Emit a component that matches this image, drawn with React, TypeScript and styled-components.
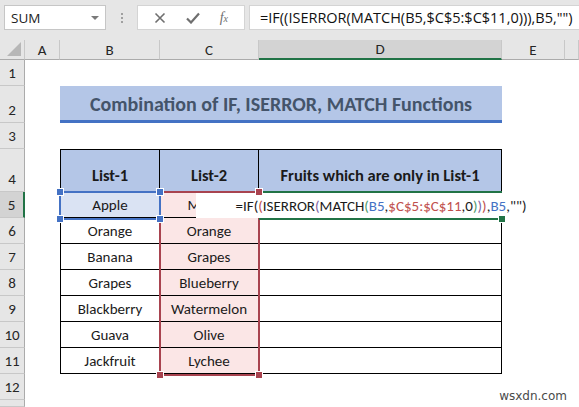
import React from 'react'
import styled, { createGlobalStyle, css } from 'styled-components'

const GlobalStyle = createGlobalStyle`
  html, body {
    margin: 0;
    padding: 0;
    background: #ffffff;
    overflow: hidden;
  }

  body {
    font-family: 'Carlito', 'Lato', sans-serif;
  }
`

const GREEN = '#217346'
const REF_BLUE = '#4472c4'
const REF_RED = '#a8434f'

const Window = styled.div`
  width: 579px;
  height: 407px;
  display: flex;
  flex-direction: column;
  overflow: hidden;
`

/* ---------- formula bar ---------- */

const FormulaBar = styled.div`
  height: 40px;
  flex: none;
  box-sizing: border-box;
  padding: 5px 0 0 4px;
  background: #e6e6e6;
  display: flex;
  align-items: flex-start;
  font-family: 'Open Sans', 'Noto Sans', sans-serif;
`

const NameBox = styled.div`
  width: 102px;
  height: 25px;
  box-sizing: border-box;
  background: #fff;
  border: 1px solid #c6c6c6;
  display: flex;
  align-items: center;
  justify-content: space-between;
  padding: 0 6px 0 6px;
  font-size: 13.5px;
  color: #222;
`

const Caret = styled.span`
  width: 0;
  height: 0;
  border-left: 4px solid transparent;
  border-right: 4px solid transparent;
  border-top: 4px solid #7a7a7a;
`

const Grip = styled.div`
  width: 31px;
  height: 25px;
  display: flex;
  flex-direction: column;
  align-items: center;
  justify-content: center;
  gap: 2px;

  span {
    width: 2px;
    height: 2px;
    background: #a0a0a0;
  }
`

const FxBox = styled.div`
  width: 108px;
  height: 25px;
  box-sizing: border-box;
  background: #fff;
  border: 1px solid #d4d4d4;
  display: flex;
  align-items: center;
  justify-content: space-around;
  padding: 0 6px;
  color: #6f6f6f;
`

const FxLabel = styled.span`
  font-family: 'Liberation Serif', serif;
  font-style: italic;
  font-size: 14px;
  color: #6f6f6f;

  sub {
    font-size: 10px;
    vertical-align: baseline;
  }
`

const FormulaInput = styled.div`
  flex: 1;
  height: 25px;
  margin-left: 4px;
  box-sizing: border-box;
  background: #fff;
  border: 1px solid #d4d4d4;
  border-right: none;
  display: flex;
  align-items: center;
  padding-left: 10px;
  font-size: 14.5px;
  color: #111;
  white-space: nowrap;
`

/* ---------- sheet ---------- */

const Sheet = styled.div`
  position: relative;
  flex: 1;
  display: grid;
  grid-template-columns: 25px 35px 100px 99px 243px 63px 1fr;
  grid-template-rows: 20px 26px 37px 26px 43px repeat(8, 26px) 1fr;
  background: #fff;
`

const Corner = styled.div`
  background: #e6e6e6;
  border-right: 1px solid #c8c8c8;
  border-bottom: 1px solid #ababab;
  box-sizing: border-box;
  position: relative;

  &::after {
    content: '';
    position: absolute;
    right: 3px;
    bottom: 3px;
    border-left: 14px solid transparent;
    border-bottom: 14px solid #b7b7b7;
  }
`

const ColHead = styled.div<{ $active?: boolean }>`
  box-sizing: border-box;
  background: ${(p) => (p.$active ? '#d3d3d3' : '#e6e6e6')};
  border-right: 1px solid #c8c8c8;
  border-bottom: ${(p) => (p.$active ? `2px solid ${GREEN}` : '1px solid #ababab')};
  display: flex;
  align-items: center;
  justify-content: center;
  font-size: 15px;
  color: #262626;
`

const RowHead = styled.div<{ $active?: boolean }>`
  box-sizing: border-box;
  background: ${(p) => (p.$active ? '#d3d3d3' : '#e6e6e6')};
  border-bottom: 1px solid #c8c8c8;
  border-right: ${(p) => (p.$active ? `2px solid ${GREEN}` : '1px solid #ababab')};
  display: flex;
  align-items: flex-end;
  justify-content: center;
  padding-bottom: 3px;
  font-size: 15px;
  color: #262626;
`

const Blank = styled.div``

const Title = styled.div`
  grid-column: 3 / 6;
  box-sizing: border-box;
  background: #b4c6e7;
  border-bottom: 3px solid ${REF_BLUE};
  display: flex;
  align-items: center;
  justify-content: center;
  font-weight: 700;
  font-size: 20px;
  color: #44546a;
  padding-top: 2px;
`

const Cell = styled.div<{ $head?: boolean; $first?: boolean; $fill?: string }>`
  box-sizing: border-box;
  border-right: 1px solid #000;
  border-bottom: 1px solid #000;
  ${(p) => p.$first && css`border-left: 1px solid #000;`}
  ${(p) => p.$head && css`
    border-top: 1px solid #000;
    font-weight: 700;
    padding-top: 8px;
  `}
  background: ${(p) => p.$fill ?? (p.$head ? '#b4c6e7' : '#fff')};
  display: flex;
  align-items: center;
  justify-content: center;
  font-size: ${(p) => (p.$head ? '16.5px' : '15px')};
  color: #1a1a1a;
  white-space: nowrap;
  overflow: hidden;
`

/* ---------- selection overlays ---------- */

const RefBox = styled.div<{ $color: string; $x: number; $y: number; $w: number; $h: number }>`
  position: absolute;
  left: ${(p) => p.$x}px;
  top: ${(p) => p.$y}px;
  width: ${(p) => p.$w}px;
  height: ${(p) => p.$h}px;
  box-sizing: border-box;
  border: 2px solid ${(p) => p.$color};
  pointer-events: none;
`

const Handle = styled.div<{ $color: string; $x: number; $y: number }>`
  position: absolute;
  left: ${(p) => p.$x - 3}px;
  top: ${(p) => p.$y - 3}px;
  width: 6px;
  height: 6px;
  box-sizing: border-box;
  background: ${(p) => p.$color};
  outline: 1px solid #fff;
  z-index: 5;
`

const EditLine = styled.div<{ $y: number }>`
  position: absolute;
  left: 259px;
  top: ${(p) => p.$y}px;
  width: 243px;
  height: 2px;
  background: ${GREEN};
  z-index: 4;
`

const EditBox = styled.div`
  position: absolute;
  left: 196px;
  top: 153px;
  width: 370px;
  height: 25px;
  background: #fff;
  display: flex;
  align-items: center;
  justify-content: center;
  font-size: 15px;
  color: #1a1a1a;
  white-space: nowrap;
  z-index: 3;
`

const Tok = styled.span<{ $c?: string }>`
  color: ${(p) => p.$c ?? '#1a1a1a'};
`

const Watermark = styled.div`
  position: absolute;
  right: 12px;
  bottom: 4px;
  font-family: 'DejaVu Sans', sans-serif;
  font-size: 12px;
  color: #4a4a4a;
  z-index: 6;
`

const colLetters = ['A', 'B', 'C', 'D', 'E']

const listOne = ['Apple', 'Orange', 'Banana', 'Grapes', 'Blackberry', 'Guava', 'Jackfruit']
const listTwo = ['Mango', 'Orange', 'Grapes', 'Blueberry', 'Watermelon', 'Olive', 'Lychee']

const formula = '=IF((ISERROR(MATCH(B5,$C$5:$C$11,0))),B5,"")'

function CrossIcon() {
  return (
    <svg width="12" height="12" viewBox="0 0 12 12">
      <path d="M1.5 1.5 L10.5 10.5 M10.5 1.5 L1.5 10.5" stroke="#6f6f6f" strokeWidth="1.6" />
    </svg>
  )
}

function CheckIcon() {
  return (
    <svg width="14" height="12" viewBox="0 0 14 12">
      <path d="M1 6.5 L5 10.5 L13 1.5" stroke="#6f6f6f" strokeWidth="2.2" fill="none" />
    </svg>
  )
}

export default function App() {
  const rows = Array.from({ length: 13 }, (_, i) => i + 1)

  const renderRow = (r: number) => {
    const head = <RowHead key={`h${r}`} $active={r === 5}>{r <= 12 ? r : ''}</RowHead>

    if (r === 2) {
      return [head, <Blank key="a2" />, <Title key="t">Combination of IF, ISERROR, MATCH Functions</Title>, <Blank key="e2" />, <Blank key="f2" />]
    }

    if (r === 4) {
      return [
        head,
        <Blank key="a4" />,
        <Cell key="b4" $head $first>List-1</Cell>,
        <Cell key="c4" $head>List-2</Cell>,
        <Cell key="d4" $head>Fruits which are only in List-1</Cell>,
        <Blank key="e4" />,
        <Blank key="f4" />,
      ]
    }

    if (r >= 5 && r <= 11) {
      const i = r - 5
      return [
        head,
        <Blank key={`a${r}`} />,
        <Cell key={`b${r}`} $first $fill={r === 5 ? '#dae3f3' : undefined}>{listOne[i]}</Cell>,
        <Cell key={`c${r}`} $fill="#fbe6e6">{listTwo[i]}</Cell>,
        <Cell key={`d${r}`} />,
        <Blank key={`e${r}`} />,
        <Blank key={`f${r}`} />,
      ]
    }

    return [head, ...[0, 1, 2, 3, 4, 5].map((c) => <Blank key={`${r}-${c}`} />)]
  }

  return (
    <>
      <GlobalStyle />
      <Window>
        <FormulaBar>
          <NameBox>
            SUM
            <Caret />
          </NameBox>
          <Grip>
            <span />
            <span />
            <span />
          </Grip>
          <FxBox>
            <CrossIcon />
            <CheckIcon />
            <FxLabel>
              f<sub>x</sub>
            </FxLabel>
          </FxBox>
          <FormulaInput>{formula}</FormulaInput>
        </FormulaBar>

        <Sheet>
          <Corner />
          {colLetters.map((l) => (
            <ColHead key={l} $active={l === 'D'}>
              {l}
            </ColHead>
          ))}
          <ColHead />

          {rows.map((r) => renderRow(r))}

          {/* reference highlights while D5 is being edited */}
          <RefBox $color={REF_RED} $x={159} $y={151} $w={101} $h={185} />
          <Handle $color={REF_RED} $x={160} $y={152} />
          <Handle $color={REF_RED} $x={259} $y={152} />
          <Handle $color={REF_RED} $x={160} $y={335} />
          <Handle $color={REF_RED} $x={259} $y={335} />

          <RefBox $color={REF_BLUE} $x={59} $y={151} $w={102} $h={29} />
          <Handle $color={REF_BLUE} $x={60} $y={152} />
          <Handle $color={REF_BLUE} $x={160} $y={152} />
          <Handle $color={REF_BLUE} $x={60} $y={179} />
          <Handle $color={REF_BLUE} $x={160} $y={179} />

          <EditBox>
            <Tok>=IF(</Tok>
            <Tok $c="#c0504d">(</Tok>
            <Tok>ISERROR</Tok>
            <Tok $c="#8064a2">(</Tok>
            <Tok>MATCH</Tok>
            <Tok $c="#4f9a6c">(</Tok>
            <Tok $c={REF_BLUE}>B5</Tok>
            <Tok>,</Tok>
            <Tok $c="#c0504d">$C$5:$C$11</Tok>
            <Tok>,0</Tok>
            <Tok $c="#4f9a6c">)</Tok>
            <Tok $c="#8064a2">)</Tok>
            <Tok $c="#c0504d">)</Tok>
            <Tok>,</Tok>
            <Tok $c={REF_BLUE}>B5</Tok>
            <Tok>,"")</Tok>
          </EditBox>
          <EditLine $y={151} />
          <EditLine $y={178} />
          <Handle $color={GREEN} $x={502} $y={179} />

          <Watermark>wsxdn.com</Watermark>
        </Sheet>
      </Window>
    </>
  )
}
